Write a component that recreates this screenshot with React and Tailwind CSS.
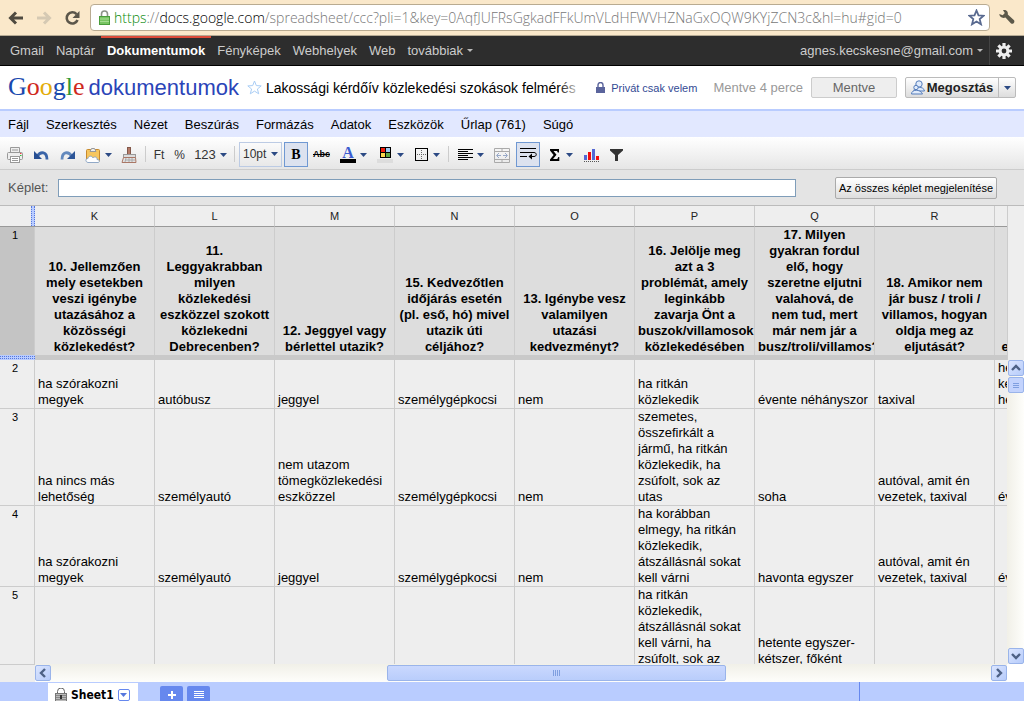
import { useState } from "react"

const sans = "font-['Liberation_Sans',sans-serif]"

const columns = ["K", "L", "M", "N", "O", "P", "Q", "R", "S"]

const questions = [
  "10. Jellemzően\nmely esetekben\nveszi igénybe\nutazásához a\nközösségi\nközlekedést?",
  "11.\nLeggyakrabban\nmilyen\nközlekedési\neszközzel szokott\nközlekedni\nDebrecenben?",
  "12. Jeggyel vagy\nbérlettel utazik?",
  "15. Kedvezőtlen\nidőjárás esetén\n(pl. eső, hó) mivel\nutazik úti\ncéljához?",
  "13. Igénybe vesz\nvalamilyen\nutazási\nkedvezményt?",
  "16. Jelölje meg\nazt a 3\nproblémát, amely\nleginkább\nzavarja Önt a\nbuszok/villamosok\nközlekedésében",
  "17. Milyen\ngyakran fordul\nelő, hogy\nszeretne eljutni\nvalahová, de\nnem tud, mert\nmár nem jár a\nbusz/troli/villamos?",
  "18. Amikor nem\njár busz / troli /\nvillamos, hogyan\noldja meg az\neljutását?",
  "elővárosi buszon",
]

const rows = [
  {
    id: 2,
    height: "h-[49px]",
    cells: ["ha szórakozni\nmegyek", "autóbusz", "jeggyel", "személygépkocsi", "nem", "ha ritkán\nközlekedik", "évente néhányszor", "taxival", "hetente\nkétszer\nhetente"],
  },
  {
    id: 3,
    height: "h-[97px]",
    cells: ["ha nincs más\nlehetőség", "személyautó", "nem utazom\ntömegközlekedési\neszközzel", "személygépkocsi", "nem", "szemetes,\nösszefirkált a\njármű, ha ritkán\nközlekedik, ha\nzsúfolt, sok az\nutas", "soha", "autóval, amit én\nvezetek, taxival", "évente"],
  },
  {
    id: 4,
    height: "h-[81px]",
    cells: ["ha szórakozni\nmegyek", "személyautó", "jeggyel", "személygépkocsi", "nem", "ha korábban\nelmegy, ha ritkán\nközlekedik,\nátszállásnál sokat\nkell várni", "havonta egyszer", "autóval, amit én\nvezetek, taxival", "évente"],
  },
  {
    id: 5,
    height: "h-[97px]",
    cells: ["", "", "", "", "", "ha ritkán\nközlekedik,\nátszállásnál sokat\nkell várni, ha\nzsúfolt, sok az\nutas", "hetente egyszer-\nkétszer, főként\nhétvégén", "", ""],
  },
]

function Caret({ className = "text-[#2c4a84]" }) {
  return (
    <svg width="7" height="4" viewBox="0 0 7 4" className={className}>
      <path d="M0 0h7L3.5 4z" fill="currentColor" />
    </svg>
  )
}

function BrowserBar() {
  return (
    <div className="flex h-9 shrink-0 items-center border-b border-[#b5aa94] bg-[#fae8ca] px-2">
      <button aria-label="Vissza" className="w-7">
        <svg width="16" height="14" viewBox="0 0 16 14" fill="none" stroke="#4f4a40" strokeWidth="3">
          <path d="M8 1.5L2.5 7 8 12.500M3 7h12" />
        </svg>
      </button>
      <button aria-label="Előre" className="w-7">
        <svg width="16" height="14" viewBox="0 0 16 14" fill="none" stroke="#d5c9b3" strokeWidth="3">
          <path d="M8 1.500L13.500 7 8 12.500M13 7H1" />
        </svg>
      </button>
      <button aria-label="Újratöltés" className="w-[26px]">
        <svg width="17" height="16" viewBox="0 0 17 16">
          <path d="M12.500 4.200A5.600 5.600 0 1 0 13.500 10" fill="none" stroke="#5b564a" strokeWidth="2.600" />
          <path d="M15.500 1v7h-7z" fill="#5b564a" />
        </svg>
      </button>
      <div className="flex h-[27px] min-w-0 flex-1 items-center rounded-[4px] border border-[#b9ab91] bg-white pr-1 pl-2">
        <svg width="11" height="15" viewBox="0 0 11 15" className="shrink-0">
          <path d="M2.500 7V4a3 3 0 0 1 6 0v3" fill="none" stroke="#8d9389" strokeWidth="1.600" />
          <rect x=".5" y="6.500" width="10" height="8" fill="#78c563" stroke="#4a9c3b" />
          <path d="M1 9h9M1 11.500h9" stroke="#a5dc92" />
        </svg>
        <div role="textbox" aria-label="Cím" className="ml-1 min-w-0 flex-1 overflow-hidden font-['Open_Sans',sans-serif] text-[14px] leading-5 font-light whitespace-nowrap text-[#777]">
          <span className="text-[#0a8a0a]">https</span>://<span className="text-black">docs.google.com</span>
          /spreadsheet/ccc?pli=1&amp;key=0AqfJUFRsGgkadFFkUmVLdHFWVHZNaGxOQW9KYjZCN3c&amp;hl=hu#gid=0
        </div>
        <button aria-label="Könyvjelző">
          <svg width="17" height="17" viewBox="0 0 17 17">
            <path d="M8.500 1.500l2 4.800 5.200.4-4 3.400 1.300 5.200-4.500-2.800L4 15.300l1.300-5.200-4-3.400 5.200-.4z" fill="#fff" stroke="#596a90" strokeWidth="1.800" />
          </svg>
        </button>
      </div>
      <button aria-label="Beállítások" className="ml-2">
        <svg width="18" height="17" viewBox="0 0 18 17">
          <path d="M5 1.200c3-.8 5.500 1.500 4.800 4.300l6 5.500c1.800 2-.8 5-3 3.200L7.500 8.500C4.500 9.700 1.300 8 1.300 5l3.400 1.200L6.800 4z" fill="#5c5849" />
        </svg>
      </button>
    </div>
  )
}

function GoogleBar() {
  const links = ["Gmail", "Naptár", "Dokumentumok", "Fényképek", "Webhelyek", "Web"]
  return (
    <nav className="flex h-[30px] shrink-0 items-stretch border-b border-black bg-[#2d2d2d] pr-3 pl-1 text-[13px] leading-7 text-[#ccc]">
      {links.map((name) =>
        name === "Dokumentumok" ? (
          <a key={name} href="#" className="border-t-2 border-[#dd4b39] px-1.5 leading-[26px] font-bold text-white">{name}</a>
        ) : (
          <a key={name} href="#" className="border-t-2 border-transparent px-1.5 leading-[26px]">{name}</a>
        )
      )}
      <button className="flex items-center gap-1 px-1.5">
        továbbiak
        <svg width="6" height="3" viewBox="0 0 6 3"><path d="M0 0h6L3 3z" fill="#bbb" /></svg>
      </button>
      <button className="ml-auto flex items-center gap-1 border-r border-[#444] pr-1.5">
        agnes.kecskesne@gmail.com
        <svg width="6" height="3" viewBox="0 0 6 3"><path d="M0 0h6L3 3z" fill="#bbb" /></svg>
      </button>
      <button aria-label="Beállítások" className="pl-1.5">
        <svg width="16" height="16" viewBox="-8 -8 16 16">
          <g stroke="#eee" strokeWidth="3.200">
            <path d="M0-8V8M-8 0H8M-5.600-5.600L5.600 5.600M-5.600 5.600L5.600-5.600" />
          </g>
          <circle r="5.300" fill="#eee" />
          <circle r="2.400" fill="#2d2d2d" />
        </svg>
      </button>
    </nav>
  )
}

function DocHeader() {
  return (
    <header className="flex h-[43px] shrink-0 items-center bg-white px-2">
      <a href="#" className="flex shrink-0 items-baseline gap-1">
        <span className="font-['Liberation_Serif',serif] text-[26px] leading-9 text-[#1a49ae]">
          G<span className="text-[#cf2a1e]">o</span><span className="text-[#e3ac0a]">o</span>g<span className="text-[#2c9a3a]">l</span><span className="text-[#cf2a1e]">e</span>
        </span>
        <span className="text-[22px] leading-9 text-[#2a44b8]">dokumentumok</span>
      </a>
      <button aria-label="Csillagozás" className="ml-2 shrink-0">
        <svg width="15" height="15" viewBox="0 0 15 15">
          <path d="M7.500 1l1.800 4.600 4.900.3-3.800 3.100 1.300 4.800-4.200-2.700-4.200 2.700L4.600 9 .8 5.900l4.900-.3z" fill="#fff" stroke="#a9cdf5" />
        </svg>
      </button>
      <h1 className="relative ml-1 min-w-0 flex-1 overflow-hidden text-[14px] leading-6 whitespace-nowrap text-black">
        Lakossági kérdőív közlekedési szokások felmérés
        <span className="absolute inset-y-0 right-0 w-6 bg-linear-to-r from-transparent to-white" />
      </h1>
      <button className="ml-3.5 flex shrink-0 items-center gap-1.5 text-[11px] leading-4 text-[#334a94]">
        <svg width="9" height="11" viewBox="0 0 9 11">
          <path d="M2 5V3a2.500 2.500 0 0 1 5 0v2" fill="none" stroke="#5a649c" strokeWidth="1.400" />
          <rect y="5" width="9" height="6" fill="#5a649c" />
        </svg>
        Privát csak velem
      </button>
      <span className="ml-4 shrink-0 text-[13px] text-[#999]">Mentve 4 perce</span>
      <button className="ml-2 h-[21px] w-[86px] shrink-0 rounded-[2px] border border-[#ccc] bg-[#eee] text-[13px] leading-4 text-[#666]">Mentve</button>
      <div className="ml-2 flex h-[21px] shrink-0 rounded-[2px] border border-[#bbb] bg-linear-to-b from-white to-[#ddd]">
        <button className="flex w-[92px] items-center justify-center text-[13px] font-bold text-[#222]">
          <svg width="14" height="15" viewBox="0 0 14 15" fill="#e0ebfb" stroke="#557dbb" className="mr-0.5 shrink-0">
            <circle cx="8" cy="4" r="3.200" />
            <path d="M3 11c0-5 10-5 10.500 0z" />
            <circle cx="5" cy="7.500" r="2.200" />
            <path d="M.5 14c0-5 9-5 11 0z" />
          </svg>
          Megosztás
        </button>
        <button aria-label="Megosztási lehetőségek" className="flex w-[17px] items-center justify-center border-l border-[#bbb]"><Caret /></button>
      </div>
    </header>
  )
}

function MenuBar() {
  const menus = ["Fájl", "Szerkesztés", "Nézet", "Beszúrás", "Formázás", "Adatok", "Eszközök", "Űrlap (761)", "Súgó"]
  return (
    <div className="flex h-7 shrink-0 items-center gap-[17px] border-t-2 border-[#b9ccff] bg-[#e2e8ff] px-2 pt-0.5 text-[13px] leading-5 text-black">
      {menus.map((m) => <button key={m}>{m}</button>)}
    </div>
  )
}

function Tool({ label, className, caret, children }) {
  return (
    <button aria-label={label} className={`flex h-6 shrink-0 items-center justify-center gap-1 pt-0.5 ${className}`}>
      {children}
      {caret && <Caret />}
    </button>
  )
}

function Separator() {
  return (
    <div className="flex w-[7px] shrink-0 justify-center">
      <div className="h-4 w-px bg-[#ccc]" />
    </div>
  )
}

function Toolbar() {
  const [bold, setBold] = useState(true)
  return (
    <div className="flex h-[33px] shrink-0 items-center border-b border-[#ccc] bg-linear-to-b from-white to-[#e6e6e6] pt-0.5 pl-0.5 text-[12px] text-[#333]">
      <Tool label="Nyomtatás" className="w-[26px]">
        <svg width="16" height="16" viewBox="0 0 16 16" fill="#eee" stroke="#999">
          <path d="M3.500 5V.5h9V5" />
          <rect x=".5" y="5.500" width="15" height="7" rx="1" />
          <rect x="3.500" y="9.500" width="9" height="6" fill="#fff" />
          <path d="M5 11.500h6M5 13.500h6M5 3h6" />
          <path d="M13 6.500h1.500" stroke="#e44" />
          <path d="M13 8.500h1.500" stroke="#3b3" />
        </svg>
      </Tool>
      <Tool label="Visszavonás" className="w-[26px]">
        <svg width="15" height="11" viewBox="0 0 15 11">
          <path d="M3 6.500C7 .5 13 2 13 9.500" fill="none" stroke="#3a64a8" strokeWidth="2.800" />
          <path d="M0 1v8h8z" fill="#274f93" />
        </svg>
      </Tool>
      <Tool label="Mégis" className="w-[26px]">
        <svg width="15" height="11" viewBox="0 0 15 11">
          <path d="M12 6.500C8 .5 2 2 2 9.500" fill="none" stroke="#6389bd" strokeWidth="2.800" />
          <path d="M15 1v8H7z" fill="#2c5597" />
        </svg>
      </Tool>
      <Tool label="Beillesztés" className="w-9" caret>
        <svg width="16" height="16" viewBox="0 0 16 16">
          <rect x="1.500" y="2.500" width="13" height="12" rx="1" fill="#f7c65e" stroke="#c78a2d" />
          <path d="M5 4.500l1.500-3h3l1.500 3z" fill="#eee" stroke="#999" />
          <path d="M3 15.500c-3-.5-2.500-4 0-4 .5-3 4-3 5-.5 1.500-2 4.500-1 4 1.500 3 0 3 3 1 3z" fill="#fff" stroke="#91a9c7" />
        </svg>
      </Tool>
      <Tool label="Formátummásoló" className="w-[26px]">
        <svg width="16" height="16" viewBox="0 0 16 16">
          <rect x="6.500" y=".5" width="3" height="8" fill="#b57b68" stroke="#83584a" />
          <rect x="2.500" y="7.500" width="12" height="3" fill="#ddd" stroke="#999" />
          <path d="M2.500 10.500L1 15.500h14l-.5-5z" fill="#e3e3e3" stroke="#aa7766" />
          <path d="M4 13h10M5 11l-1 4M8 11v4M11 11v4" stroke="#aaa" />
        </svg>
      </Tool>
      <Separator />
      <Tool className="w-5">Ft</Tool>
      <Tool className="w-[21px]">%</Tool>
      <Tool className="w-[41px]" caret><span className="text-[13px]">123</span></Tool>
      <Separator />
      <div className="relative ml-px shrink-0">
        <select aria-label="Betűméret" defaultValue="10pt" className="h-[25px] w-[43px] appearance-none border border-[#bccbe4] bg-transparent pl-[3px] text-[12px] leading-5">
          <option>8pt</option>
          <option>10pt</option>
          <option>12pt</option>
        </select>
        <span className="pointer-events-none absolute top-2.5 right-1"><Caret /></span>
      </div>
      <button
        aria-label="Félkövér"
        aria-pressed={bold}
        onClick={() => setBold(!bold)}
        className={`ml-0.5 h-[25px] w-6 shrink-0 border font-['Liberation_Serif',serif] text-[14px] font-black text-black ${bold ? "border-[#6f98d2] bg-[#dce2ef]" : "border-transparent"}`}
      >
        B
      </button>
      <Tool label="Áthúzott" className="w-[27px]"><span className="text-[9px] font-bold text-black line-through">Abc</span></Tool>
      <Tool label="Szövegszín" className="w-[37px]" caret>
        <span className="w-4 border-b-4 border-black text-center font-['Liberation_Serif',serif] text-[16px] leading-3 font-bold text-[#3b5bd0]">A</span>
      </Tool>
      <Tool label="Háttérszín" className="w-[37px]" caret>
        <svg width="16" height="16" viewBox="0 0 16 16">
          <path d="M3 0h11v11H3z" />
          <path d="M4 1h4v4H4z" fill="#f21d0d" /><path d="M9 1h4v4H9z" fill="#9fcbf1" />
          <path d="M4 6h4v4H4z" fill="#fbd64b" /><path d="M9 6h4v4H9z" fill="#5da743" />
          <path d="M0 12h16v4H0z" fill="#ddd" />
        </svg>
      </Tool>
      <Tool label="Szegélyek" className="w-9" caret>
        <svg width="14" height="14" viewBox="0 0 14 14" fill="none">
          <rect x=".5" y=".5" width="12" height="12" stroke="#000" />
          <path d="M6.500 2v10M2 6.500h10" stroke="#666" strokeDasharray="1 1" />
        </svg>
      </Tool>
      <Separator />
      <Tool label="Igazítás" className="w-[37px]" caret>
        <svg width="15" height="12" viewBox="0 0 15 12" stroke="#000">
          <path d="M0 .5h15M0 2.500h10M0 4.500h15M0 6.500h10M0 8.500h15M0 10.500h10" />
        </svg>
      </Tool>
      <Tool label="Cellák egyesítése" className="w-[26px]">
        <svg width="16" height="15" viewBox="0 0 16 15" fill="none" stroke="#aaa">
          <path d="M.5.5h15v14H.5zM.5 3.500h15M.5 11.500h15M8 .5v3M8 11.500v3" />
          <path d="M3 7.500h4M9 7.500h4M5 5L2.500 7.500 5 10M11 5l2.500 2.500L11 10" stroke="#98a9c8" />
        </svg>
      </Tool>
      <button aria-label="Sortörés" className="ml-px flex h-[25px] w-6 shrink-0 items-center justify-center border border-[#6f98d2] bg-[#dce2ef]">
        <svg width="17" height="12" viewBox="0 0 17 12" fill="none" stroke="#000">
          <path d="M0 .5h16M0 4.500h14c3 0 3 4 0 4h-4M0 8.500h7" />
          <path d="M12 5.500v6l-3.500-3z" fill="#000" stroke="none" />
        </svg>
      </button>
      <Tool label="Függvények" className="w-10" caret>
        <svg width="14" height="12" viewBox="0 0 14 12">
          <path d="M2 0h9v3.500h-1.200L9 2H5.500l3 3.800L5 10h4.300l1-2h1v4H2v-1.500l3.600-4.600L2 1.500z" />
        </svg>
      </Tool>
      <Tool label="Diagram" className="w-[23px]">
        <svg width="16" height="15" viewBox="0 0 16 15">
          <path d="M0 7h3v5H0zM8 1h3v11H8z" fill="#5468d4" />
          <path d="M4 4h3v8H4zM12 8h3v4h-3z" fill="#f20d0d" />
          <path d="M0 13.500h16" stroke="#555" strokeDasharray="1 1" />
        </svg>
      </Tool>
      <Tool label="Szűrő" className="w-[26px]">
        <svg width="13" height="12" viewBox="0 0 13 12">
          <path d="M0 0h13v1.500L8 6v6H5V6L0 1.500z" fill="#333" />
        </svg>
      </Tool>
    </div>
  )
}

function FormulaBar() {
  return (
    <div className="flex h-9 shrink-0 items-center border-b border-[#bbb] bg-[#e4e4e4] pr-[27px] pl-2 text-[13px] text-[#555]">
      <label htmlFor="formula">Képlet:</label>
      <input id="formula" className="ml-2.5 h-[18px] min-w-0 flex-1 border border-[#7f9db9] bg-white px-1 text-[12px] text-black" />
      <button className="ml-[39px] h-[22px] w-[162px] shrink-0 rounded-[2px] border border-[#aaa] bg-linear-to-b from-white to-[#ddd] text-[11px] leading-4 whitespace-nowrap text-black">
        Az összes képlet megjelenítése
      </button>
    </div>
  )
}

function Sheet() {
  const line = "border-r border-[#ccc] overflow-hidden"
  return (
    <table className="w-[1115px] table-fixed border-separate border-spacing-0 text-[13px] leading-4 text-black">
      <colgroup>
        <col className="w-[35px]" />
        {columns.map((c) => <col key={c} className="w-[120px]" />)}
      </colgroup>
      <thead>
        <tr className="h-[21px] bg-[#eee] text-[11px] text-[#222]">
          <td className="border-b border-[#999] p-0">
            <div className="ml-auto h-5 w-1 border-x border-dotted border-[#5577dd] bg-[#b9ccff]" />
          </td>
          {columns.map((c) => <th key={c} scope="col" className="border-r border-b border-r-[#ccc] border-b-[#999] p-0 font-normal">{c}</th>)}
        </tr>
      </thead>
      <tbody>
        <tr className="h-32 bg-[#ddd]">
          <th scope="row" className="border-r border-[#ccc] bg-[#c4c4c4] p-0 pr-1 align-top text-[11px] font-normal">1</th>
          {questions.map((q) => (
            <td key={q} className={`${line} px-[3px] py-0 text-center align-bottom font-bold whitespace-pre`}>{q}</td>
          ))}
        </tr>
        <tr className="h-[5px]">
          <td className="bg-[#b9ccff] p-0"><div className="h-[3px] border-y border-dotted border-[#5577dd]" /></td>
          <td colSpan={9} className="bg-[#c9c9c9] p-0" />
        </tr>
        {rows.map((row) => (
          <tr key={row.id} className={`${row.height} bg-[#eee]`}>
            <th scope="row" className="border-r border-b border-[#ccc] p-0 pr-1 align-top text-[11px] font-normal">{row.id}</th>
            {row.cells.map((text, i) => (
              <td key={columns[i]} className={`${line} border-b px-[3px] py-0 align-bottom whitespace-pre`}>{text}</td>
            ))}
          </tr>
        ))}
      </tbody>
    </table>
  )
}

function ScrollButton({ label, d }) {
  return (
    <button aria-label={label} className="flex size-4 shrink-0 items-center justify-center rounded-[2px] border border-[#9ab4ea] bg-linear-to-br from-[#dce6ff] to-[#b6cbfa]">
      <svg width="10" height="10" viewBox="0 0 10 10" fill="none" stroke="#4d6185" strokeWidth="2.400">
        <path d={d} />
      </svg>
    </button>
  )
}

function Grid() {
  return (
    <div className="flex min-h-0 flex-1 bg-[#eee]">
      <div className="flex min-w-0 flex-1 flex-col">
        <div className="min-h-0 flex-1 overflow-hidden"><Sheet /></div>
        <div className="flex h-[18px] shrink-0">
          <div className="w-[35px] shrink-0 border-t border-[#ccc] bg-[#eee]" />
          <div className="flex min-w-0 flex-1 items-center bg-linear-to-b from-[#f1f0e8] to-[#fefefb]">
            <ScrollButton label="Balra" d="M7 1L3 5l4 4" />
            <div className="flex-[38]" />
            <div className="flex h-4 flex-[38] items-center justify-center gap-px rounded-[2px] border border-[#9ab4ea] bg-linear-to-b from-[#cad8fe] to-[#b9cdfb]">
              <i className="h-1.5 w-px bg-[#7f9fe0]" />
              <i className="h-1.5 w-px bg-[#7f9fe0]" />
              <i className="h-1.5 w-px bg-[#7f9fe0]" />
              <i className="h-1.5 w-px bg-[#7f9fe0]" />
            </div>
            <div className="flex-[30]" />
            <ScrollButton label="Jobbra" d="M3 1l4 4-4 4" />
          </div>
        </div>
      </div>
      <div className="flex w-[17px] shrink-0 flex-col">
        <div className="h-[154px] shrink-0 border-l border-[#ccc] bg-[#eee]" />
        <div className="flex flex-1 flex-col items-center bg-linear-to-r from-[#f1f0e8] to-[#fefefb]">
          <ScrollButton label="Fel" d="M1 7l4-4 4 4" />
          <div className="mt-px flex h-4 w-4 flex-col items-center justify-center gap-px rounded-[2px] border border-[#9ab4ea] bg-[#c3d3fd]">
            <i className="h-px w-1.5 bg-[#7f9fe0]" />
            <i className="h-px w-1.5 bg-[#7f9fe0]" />
            <i className="h-px w-1.5 bg-[#7f9fe0]" />
          </div>
          <div className="flex-1" />
          <ScrollButton label="Le" d="M1 3l4 4 4-4" />
        </div>
        <div className="h-[18px] shrink-0 bg-white" />
      </div>
    </div>
  )
}

function SheetTabs() {
  return (
    <footer className="flex h-[19px] shrink-0 items-start overflow-hidden bg-[#b9ccff] pl-12">
      <div className="mt-px flex h-6 w-[90px] shrink-0 items-center bg-white pl-[7px]">
        <svg width="12" height="15" viewBox="0 0 12 15" className="shrink-0">
          <path d="M2.500 7V3.500a3.500 3.500 0 0 1 7 0V7" fill="none" stroke="#666" />
          <rect x=".5" y="5.500" width="11" height="9" fill="#bbb" stroke="#777" />
          <path d="M1 7.500h10M1 9.500h10M1 11.500h10" stroke="#888" />
          <path d="M5 7h2v4H5z" fill="#333" />
        </svg>
        <button className="ml-1 font-['DejaVu_Sans_Condensed','DejaVu_Sans',sans-serif] text-[12px] leading-5 font-bold text-black">Sheet1</button>
        <button aria-label="Munkalap menü" className="ml-1 flex size-3 shrink-0 items-center justify-center rounded-[2px] border border-[#6688ee]"><Caret className="text-[#5577dd]" /></button>
      </div>
      <button aria-label="Munkalap hozzáadása" className="mt-1 ml-[22px] flex h-5 w-[23px] shrink-0 justify-center rounded-[2px] bg-[#6688ee] pt-[5px]">
        <svg width="8" height="8" viewBox="0 0 8 8" stroke="#fff" strokeWidth="2"><path d="M4 0v8M0 4h8" /></svg>
      </button>
      <button aria-label="Összes munkalap" className="mt-1 ml-1 flex h-5 w-[23px] shrink-0 justify-center rounded-[2px] bg-[#6688ee] pt-[5px]">
        <svg width="10" height="8" viewBox="0 0 10 8" stroke="#fff"><path d="M0 .5h10M0 2.500h10M0 4.500h10M0 6.500h10" /></svg>
      </button>
      <div className="mr-[164px] ml-auto h-full w-px bg-[#6688ee]" />
    </footer>
  )
}

export default function App() {
  return (
    <div className={`flex h-screen flex-col overflow-hidden bg-white ${sans}`}>
      <BrowserBar />
      <GoogleBar />
      <DocHeader />
      <MenuBar />
      <Toolbar />
      <FormulaBar />
      <Grid />
      <SheetTabs />
    </div>
  )
}
